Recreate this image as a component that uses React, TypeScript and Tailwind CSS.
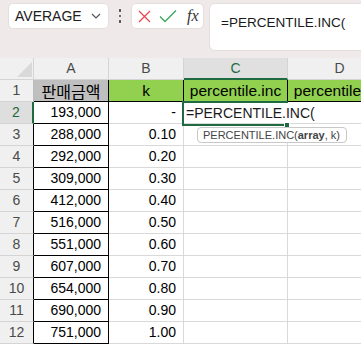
import React from 'react';

const FONT = '"Liberation Sans", "Noto Sans CJK KR", Arial, sans-serif';

const amounts = ['193,000', '288,000', '292,000', '309,000', '412,000', '516,000', '551,000', '607,000', '654,000', '690,000', '751,000'];
const ks = ['-', '0.10', '0.20', '0.30', '0.40', '0.50', '0.60', '0.70', '0.80', '0.90', '1.00'];

function HeaderRow() {
  return (
    <div className="flex h-[22px] bg-[#f0f0f0] text-[14px] text-[#4a4a4a]">
      <div className="relative w-[34px] flex-none border-r border-b border-[#d4d4d4]">
        <svg className="absolute left-[17px] top-[4px]" width="15" height="15" viewBox="0 0 15 15">
          <polygon points="15,0 15,15 0,15" fill="#d9d9d9" />
        </svg>
      </div>
      <div className="w-[75px] flex-none border-r border-b border-[#d4d4d4] flex items-center justify-center">A</div>
      <div className="w-[75px] flex-none border-r border-b border-[#d4d4d4] flex items-center justify-center">B</div>
      <div className="w-[104px] flex-none border-r border-[#d4d4d4] border-b-2 border-b-[#1e6b41] bg-[#e0e0e0] text-[#1e6b41] flex items-center justify-center">C</div>
      <div className="w-[104px] flex-none border-r border-b border-[#d4d4d4] flex items-center justify-center">D</div>
    </div>
  );
}

export default function App() {
  return (
    <div className="relative w-[361px] h-[348px] overflow-hidden bg-white" style={{ fontFamily: FONT }}>
      {/* toolbar */}
      <div className="h-[58px] bg-[#f0e9e9] flex items-start pt-[3px] pl-[8px] overflow-hidden">
        <div className="w-[101px] h-[26px] flex-none bg-white rounded-[5px] border border-[#e4dede] flex items-center justify-between pl-[6px] pr-[7px]">
          <span className="text-[14px] text-[#202020]">AVERAGE</span>
          <svg width="10" height="6" viewBox="0 0 10 6">
            <path d="M1 1 L5 5 L9 1" fill="none" stroke="#555" strokeWidth="1.2" />
          </svg>
        </div>
        <div className="w-[22px] h-[26px] flex-none flex flex-col items-center justify-center gap-[3px]">
          <div className="w-[2.5px] h-[2.5px] bg-[#444] rounded-full" />
          <div className="w-[2.5px] h-[2.5px] bg-[#444] rounded-full" />
          <div className="w-[2.5px] h-[2.5px] bg-[#444] rounded-full" />
        </div>
        <div className="w-[73px] h-[26px] flex-none bg-white rounded-[5px] border border-[#e4dede] flex items-center pl-[6px]">
          <svg width="13" height="13" viewBox="0 0 13 13">
            <path d="M1 1 L12 12 M12 1 L1 12" stroke="#e5484d" strokeWidth="1.3" />
          </svg>
          <svg className="ml-[8px]" width="18" height="14" viewBox="0 0 18 14">
            <path d="M1 7.5 L6 12.5 L17 1.5" fill="none" stroke="#3aa55c" strokeWidth="1.3" />
          </svg>
          <span className="ml-[10px] text-[16px] italic text-[#333] leading-none" style={{ fontFamily: '"Liberation Serif", serif' }}>fx</span>
        </div>
        <div className="ml-[5px] w-[170px] h-[48px] flex-none bg-white rounded-[6px] border border-[#e4dede] pl-[11px] pt-[6px]">
          <span className="text-[13.5px] text-[#1a1a1a] whitespace-nowrap">=PERCENTILE.INC(</span>
        </div>
      </div>

      {/* grid */}
      <div className="flex flex-col">
        <HeaderRow />
        {/* row 1 */}
        <div className="flex h-[22px]">
          <div className="w-[34px] flex-none bg-[#f0f0f0] border-r border-r-[#bdbdbd] border-b border-b-[#d4d4d4] flex items-center justify-center text-[14px] text-[#4a4a4a]">1</div>
          <div className="w-[75px] flex-none bg-[#bfbfbf] border-r border-b border-black flex items-center justify-center text-[16px] text-black" style={{ fontFamily: '"Noto Sans CJK KR", sans-serif' }}>판매금액</div>
          <div className="w-[75px] flex-none bg-[#92d050] border-r border-b border-black flex items-center justify-center text-[15.5px] text-black">k</div>
          <div className="w-[104px] flex-none bg-[#92d050] border-r border-b border-black flex items-center justify-center text-[15.5px] text-black whitespace-nowrap overflow-hidden">percentile.inc</div>
          <div className="w-[104px] flex-none bg-[#92d050] border-r border-b border-black flex items-center justify-center text-[15.5px] text-black whitespace-nowrap overflow-hidden">percentile.inc</div>
        </div>
        {amounts.map((a, i) => {
          const rowNum = i + 2;
          const sel = rowNum === 2;
          return (
            <div key={rowNum} className="flex h-[22px]">
              <div
                className={
                  sel
                    ? 'w-[34px] flex-none bg-[#dedede] border-r-2 border-r-[#1e6b41] border-b border-b-[#d4d4d4] flex items-center justify-center text-[14px] text-[#1e6b41]'
                    : 'w-[34px] flex-none bg-[#f0f0f0] border-r border-r-black border-b border-b-[#d4d4d4] flex items-center justify-center text-[14px] text-[#4a4a4a]'
                }
              >
                {rowNum}
              </div>
              <div className="w-[75px] flex-none border-r border-b border-black flex items-center justify-end pr-[7px] text-[14px] text-black">{a}</div>
              <div className="w-[75px] flex-none border-r border-b border-[#d9d9d9] flex items-center justify-end pr-[7px] text-[14px] text-black">{ks[i]}</div>
              <div className={sel ? 'w-[104px] flex-none border-b border-[#d9d9d9]' : 'w-[104px] flex-none border-r border-b border-[#d9d9d9]'} />
              <div className="w-[104px] flex-none border-r border-b border-[#d9d9d9]" />
            </div>
          );
        })}
      </div>

      {/* active cell in edit mode */}
      <div className="absolute left-[182px] top-[101px] w-[106px] h-[25px] border-l-2 border-t-2 border-b-2 border-[#1e6b41]" />
      <div className="absolute left-[186px] top-[103px] h-[21px] flex items-center text-[14px] text-[#1a1a1a] whitespace-nowrap">=PERCENTILE.INC(</div>
      <div className="absolute left-[284px] top-[122px] w-[6px] h-[6px] bg-[#1e6b41] border border-white" />

      {/* function tooltip */}
      <div className="absolute left-[197px] top-[127px] w-[150px] h-[16px] bg-white border border-[#c8c8c8] rounded-[4px] flex items-center pl-[5px] text-[11px] text-[#444] whitespace-nowrap">
        PERCENTILE.INC(<span className="font-bold">array</span>, k)
      </div>
    </div>
  );
}
